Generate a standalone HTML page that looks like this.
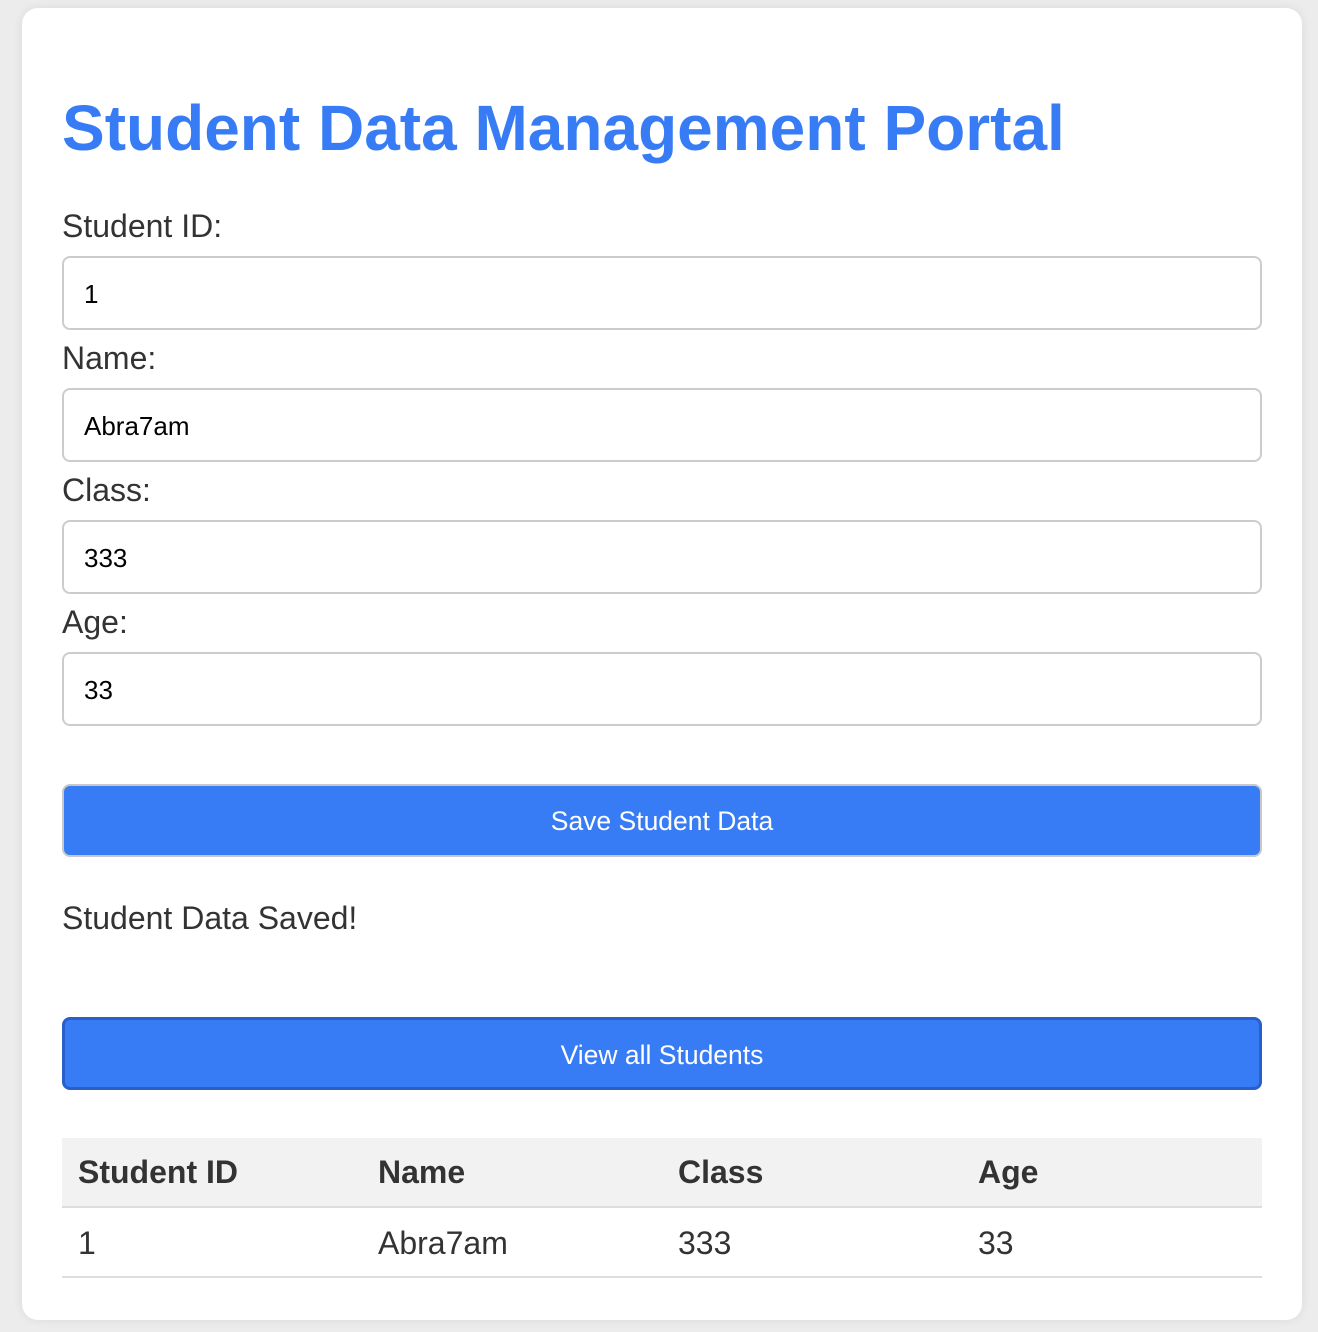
<!DOCTYPE html>
<html><head><style>
body{margin:0;background:#ececec;font-family:"Liberation Sans",Arial,sans-serif;width:1318px;height:1332px;position:relative;overflow:hidden}
.card{position:absolute;left:22px;top:8px;width:1280px;height:1312px;background:#fff;border-radius:16px;box-shadow:0 0 10px rgba(0,0,0,.08)}
h1{position:absolute;left:62px;top:88px;margin:0;font-size:64px;font-weight:bold;color:#377cf5;line-height:80px;white-space:nowrap}
.lbl{position:absolute;left:62px;font-size:32px;color:#333;line-height:36px;white-space:nowrap}
.inp{position:absolute;left:62px;width:1196px;height:70px;border:2px solid #ccc;border-radius:8px;box-sizing:content-box;font-size:26px;color:#000;line-height:72px;text-indent:20px}
.btn{position:absolute;left:62px;width:1200px;height:73px;box-sizing:border-box;background:#377cf5;color:#fff;font-size:26.5px;text-align:center;line-height:70px;border-radius:8px}
table{position:absolute;left:62px;top:1138px;width:1200px;border-collapse:collapse;font-size:32px;color:#333}
th,td{text-align:left;padding:0 16px;width:300px;box-sizing:border-box}
th{background:#f2f2f2;height:69px;border-bottom:2px solid #ddd}
td{height:70px;border-bottom:2px solid #ddd;padding-top:2px}
</style></head><body>
<div class="card"></div>
<h1>Student Data Management Portal</h1>
<div class="lbl" style="top:208px">Student ID:</div>
<div class="inp" style="top:256px">1</div>
<div class="lbl" style="top:340px">Name:</div>
<div class="inp" style="top:388px">Abra7am</div>
<div class="lbl" style="top:472px">Class:</div>
<div class="inp" style="top:520px">333</div>
<div class="lbl" style="top:604px">Age:</div>
<div class="inp" style="top:652px">33</div>
<div class="btn" style="top:784px;border:2px solid #c8c8c8">Save Student Data</div>
<div class="lbl" style="top:900px">Student Data Saved!</div>
<div class="btn" style="top:1017px;border:3px solid #2a5fc9">View all Students</div>
<table><tr><th>Student ID</th><th>Name</th><th>Class</th><th>Age</th></tr>
<tr><td>1</td><td>Abra7am</td><td>333</td><td>33</td></tr></table>
</body></html>
